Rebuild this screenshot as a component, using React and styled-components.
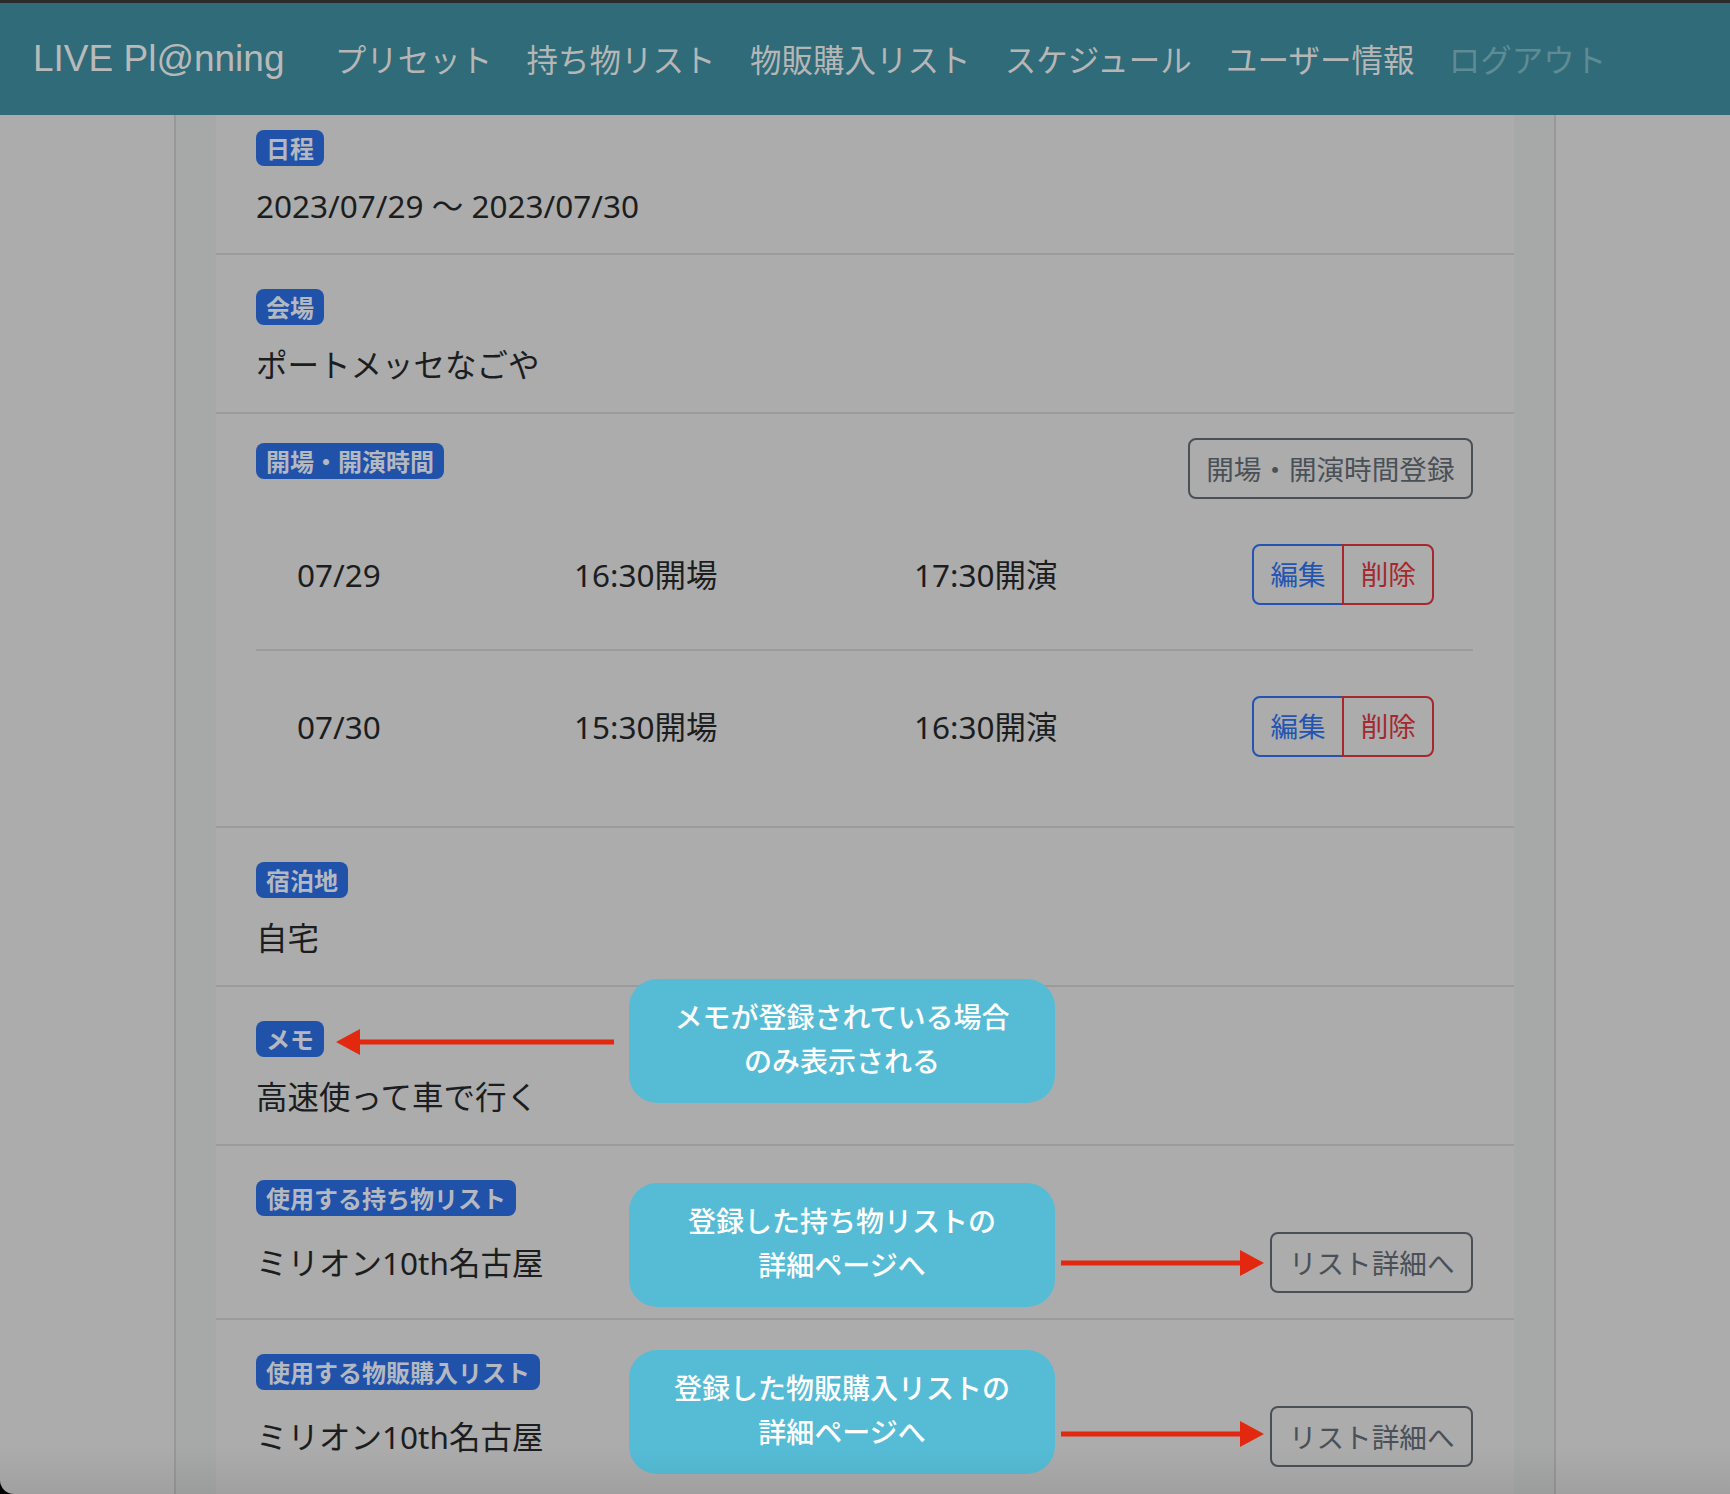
import React from "react";
import styled, { createGlobalStyle } from "styled-components";

const Global = createGlobalStyle`
  html, body { margin: 0; padding: 0; background: #000; }
  body { font-family: "Noto Sans", "Noto Sans CJK JP", sans-serif; }
  #root { width: 1730px; height: 1494px; }
  * { box-sizing: border-box; }
`;

const Window = styled.div`
  position: relative;
  width: 1730px;
  height: 1494px;
  overflow: hidden;
  background: #acacac;
  border-top: 3px solid #2b2b2b;
  border-bottom-left-radius: 14px;
  display: flex;
  flex-direction: column;
`;

const Navbar = styled.nav`
  height: 112px;
  flex: none;
  background: #2f6b78;
  display: flex;
  align-items: center;
  padding-left: 33px;
`;

const Brand = styled.div`
  font-family: "Liberation Sans", "Noto Sans CJK JP", sans-serif;
  font-size: 37px;
  color: #b9b9b9;
  margin-right: 33px;
  white-space: nowrap;
`;

const NavLink = styled.div`
  font-family: "Noto Sans CJK JP", sans-serif;
  font-size: 31.5px;
  line-height: 1;
  padding: 0 17.2px;
  color: ${(p) => (p.$disabled ? "#5f8b95" : "#b6b6b6")};
  white-space: nowrap;
`;

const Container = styled.main`
  flex: 1;
  width: 1382px;
  margin: 0 auto;
  border-left: 2px solid #989898;
  border-right: 2px solid #989898;
  background: #a7a9a9;
  padding: 0 40px;
`;

const List = styled.div`
  background: #acacac;
  height: 100%;
`;

const Item = styled.section`
  display: flex;
  flex-direction: column;
  align-items: flex-start;
  gap: 16px;
  padding: ${(p) => p.$top ?? 34}px 41px ${(p) => p.$bottom ?? 23}px 40px;
  border-bottom: ${(p) => (p.$last ? "none" : "2px solid #9b9b9b")};
`;

const Badge = styled.span`
  display: inline-block;
  font-family: "Noto Sans CJK JP", sans-serif;
  font-weight: 700;
  font-size: 24px;
  line-height: 24px;
  padding: 6px 10px;
  border-radius: 8px;
  background: #2152aa;
  color: #b4b8c0;
  white-space: nowrap;
  margin-top: ${(p) => p.$offset || 0}px;
`;

const Value = styled.div`
  font-size: 31.5px;
  line-height: 48px;
  color: #1b1d1f;
  white-space: nowrap;
`;

const ValueRow = styled.div`
  align-self: stretch;
  height: 61px;
  display: flex;
  align-items: center;
  justify-content: space-between;
`;

const TimesItem = styled.section`
  padding: 24px 41px 25px 40px;
  border-bottom: 2px solid #9b9b9b;
`;

const TimesHeader = styled.div`
  display: flex;
  justify-content: space-between;
  align-items: flex-start;
`;

const TimeRow = styled.div`
  display: grid;
  grid-template-columns: 277px 340px 338px auto;
  align-items: center;
  height: ${(p) => (p.$divided ? 152 : 150)}px;
  padding-left: 41px;
  border-bottom: ${(p) => (p.$divided ? "2px solid #9b9b9b" : "none")};
`;

const Cell = styled.div`
  font-size: 31.5px;
  line-height: 48px;
  padding-top: 1px;
  color: #1b1d1f;
  white-space: nowrap;
`;

const Button = styled.button`
  font-family: "Noto Sans CJK JP", sans-serif;
  font-size: 27.6px;
  line-height: 1;
  height: 61px;
  padding: 0 16.5px;
  background: transparent;
  border: 2px solid ${(p) => p.$color || "#4a5057"};
  color: ${(p) => p.$color || "#4a5057"};
  border-radius: ${(p) =>
    p.$pos === "left" ? "8px 0 0 8px" : p.$pos === "right" ? "0 8px 8px 0" : "8px"};
  margin-left: ${(p) => (p.$pos === "right" ? "-2px" : "0")};
  white-space: nowrap;
  cursor: pointer;
`;

const Group = styled.div`
  display: flex;
`;

const Callout = styled.div`
  position: absolute;
  left: 629px;
  top: ${(p) => p.$top}px;
  width: 426px;
  height: 124px;
  padding-bottom: 6px;
  border-radius: 28px;
  background: #56bcd6;
  color: #ffffff;
  font-family: "Noto Sans CJK JP", sans-serif;
  font-weight: 500;
  font-size: 28px;
  line-height: 44px;
  display: flex;
  flex-direction: column;
  align-items: center;
  justify-content: center;
  text-align: center;
  white-space: nowrap;
`;

const ArrowSvg = styled.svg`
  position: absolute;
  left: ${(p) => p.$x}px;
  top: ${(p) => p.$y}px;
  overflow: visible;
`;

const BottomShade = styled.div`
  position: absolute;
  left: 0;
  right: 0;
  bottom: 0;
  height: 48px;
  background: linear-gradient(to bottom, rgba(0, 0, 0, 0), rgba(0, 0, 0, 0.07));
  pointer-events: none;
`;

const RED = "#e2290f";

function Arrow({ x, y, length, dir }) {
  const h = 26;
  const head = 24;
  const left = dir === "left";
  return (
    <ArrowSvg $x={x} $y={y} width={length} height={h} viewBox={`0 0 ${length} ${h}`}>
      <rect
        x={left ? head - 2 : 0}
        y={h / 2 - 2.5}
        width={length - head + 2}
        height={5}
        fill={RED}
      />
      {left ? (
        <polygon points={`0,${h / 2} ${head},0 ${head},${h}`} fill={RED} />
      ) : (
        <polygon
          points={`${length},${h / 2} ${length - head},0 ${length - head},${h}`}
          fill={RED}
        />
      )}
    </ArrowSvg>
  );
}

const times = [
  { date: "07/29", open: "16:30開場", start: "17:30開演" },
  { date: "07/30", open: "15:30開場", start: "16:30開演" },
];

export default function App() {
  return (
    <>
      <Global />
      <Window>
        <Navbar>
          <Brand>LIVE Pl@nning</Brand>
          <NavLink>プリセット</NavLink>
          <NavLink>持ち物リスト</NavLink>
          <NavLink>物販購入リスト</NavLink>
          <NavLink>スケジュール</NavLink>
          <NavLink>ユーザー情報</NavLink>
          <NavLink $disabled>ログアウト</NavLink>
        </Navbar>
        <Container>
          <List>
            <Item $top={15}>
              <Badge>日程</Badge>
              <Value>2023/07/29 〜 2023/07/30</Value>
            </Item>
            <Item>
              <Badge>会場</Badge>
              <Value>ポートメッセなごや</Value>
            </Item>
            <TimesItem>
              <TimesHeader>
                <Badge $offset={5}>開場・開演時間</Badge>
                <Button>開場・開演時間登録</Button>
              </TimesHeader>
              {times.map((t, i) => (
                <TimeRow key={t.date} $divided={i < times.length - 1}>
                  <Cell>{t.date}</Cell>
                  <Cell>{t.open}</Cell>
                  <Cell>{t.start}</Cell>
                  <Group>
                    <Button $pos="left" $color="#2355b0">編集</Button>
                    <Button $pos="right" $color="#a4282e">削除</Button>
                  </Group>
                </TimeRow>
              ))}
            </TimesItem>
            <Item>
              <Badge>宿泊地</Badge>
              <Value>自宅</Value>
            </Item>
            <Item>
              <Badge>メモ</Badge>
              <Value>高速使って車で行く</Value>
            </Item>
            <Item $bottom={25}>
              <Badge>使用する持ち物リスト</Badge>
              <ValueRow>
                <Value>ミリオン10th名古屋</Value>
                <Button>リスト詳細へ</Button>
              </ValueRow>
            </Item>
            <Item $bottom={25} $last>
              <Badge>使用する物販購入リスト</Badge>
              <ValueRow>
                <Value>ミリオン10th名古屋</Value>
                <Button>リスト詳細へ</Button>
              </ValueRow>
            </Item>
          </List>
        </Container>

        <Callout $top={976}>
          <div>メモが登録されている場合</div>
          <div>のみ表示される</div>
        </Callout>
        <Callout $top={1180}>
          <div>登録した持ち物リストの</div>
          <div>詳細ページへ</div>
        </Callout>
        <Callout $top={1347}>
          <div>登録した物販購入リストの</div>
          <div>詳細ページへ</div>
        </Callout>
        <Arrow x={336} y={1026} length={278} dir="left" />
        <Arrow x={1061} y={1247} length={203} dir="right" />
        <Arrow x={1061} y={1418} length={203} dir="right" />
        <BottomShade />
      </Window>
    </>
  );
}
